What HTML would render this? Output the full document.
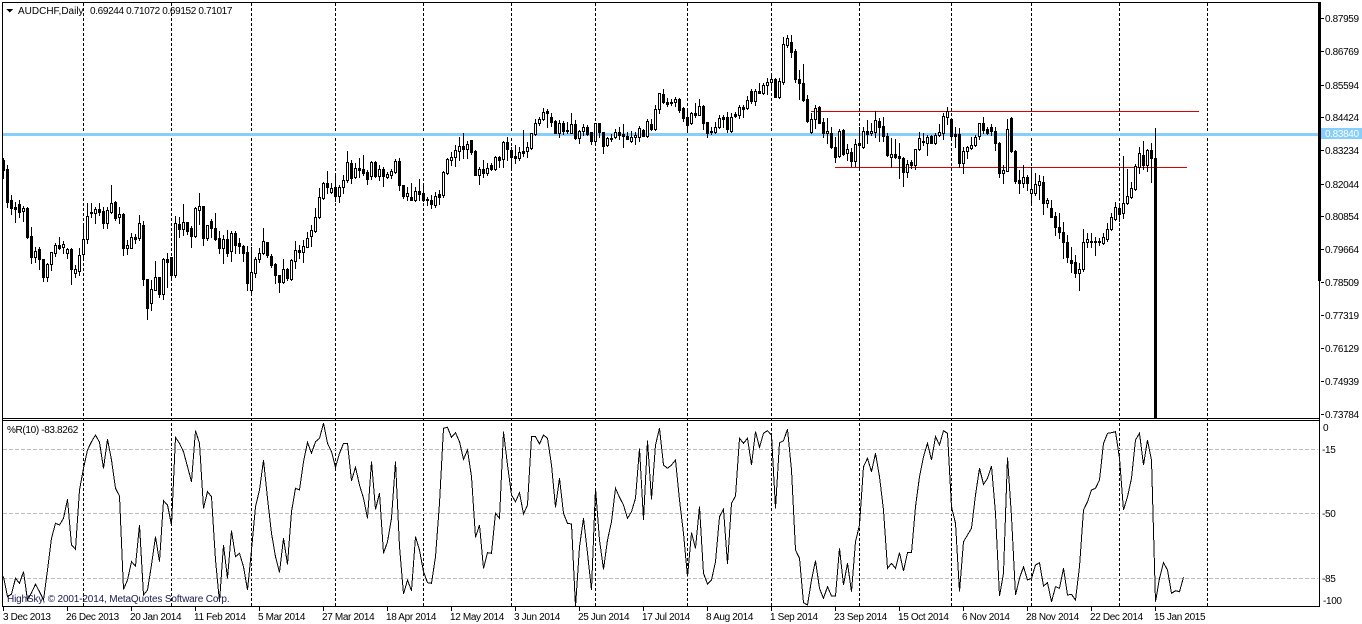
<!DOCTYPE html>
<html>
<head>
<meta charset="utf-8">
<title>AUDCHF,Daily</title>
<style>
html,body{margin:0;padding:0;background:#fff;width:1362px;height:624px;overflow:hidden}
svg{position:absolute;left:0;top:0;display:block}
text{font-family:"Liberation Sans",sans-serif;font-size:10px;fill:#000;letter-spacing:-.35px}
</style>
</head>
<body>
<svg id="c" width="1362" height="624" viewBox="0 0 1362 624" xmlns="http://www.w3.org/2000/svg">
<rect width="1362" height="624" fill="#fff"/>
<g id="dash" shape-rendering="crispEdges" stroke="#000" stroke-dasharray="3 2" stroke-width="1">
<path d="M83.5 3V606M171.5 3V606M251.5 3V606M335.5 3V606M423.5 3V606M511.5 3V606M595.5 3V606M687.5 3V606M771.5 3V606M859.5 3V606M951.5 3V606M1031.5 3V606M1119.5 3V606M1207.5 3V606"/>
</g>
<g shape-rendering="crispEdges" stroke="#bdbdbd" stroke-dasharray="4 2" stroke-width="1">
<path d="M3 449.5H1318M3 513.5H1318M3 578.5H1318"/>
</g>
<rect x="3" y="133" width="1315" height="3" fill="#87cefa"/>
<g shape-rendering="crispEdges" stroke="#d80000" stroke-width="1">
<path d="M811 111.5H1199M835 167.5H1187"/>
</g>
<g id="candles" shape-rendering="crispEdges"></g>
<polyline id="wpr" fill="none" stroke="#000" stroke-width="1" shape-rendering="crispEdges"/>
<g shape-rendering="crispEdges" fill="#fff">
<rect x="0" y="607" width="1362" height="17"/>
<rect x="1321" y="0" width="41" height="607"/>
</g>
<g shape-rendering="crispEdges" fill="#000">
<rect x="2" y="2" width="1318" height="1"/>
<rect x="2" y="2" width="1" height="605"/>
<rect x="2" y="418" width="1318" height="1"/>
<rect x="2" y="420" width="1318" height="1"/>
<rect x="2" y="606" width="1318" height="1"/>
<rect x="1318" y="2" width="3" height="279"/>
<rect x="1319" y="281" width="1" height="326"/>
<path d="M6 9h7l-3.500 3.500z"/>
<path d="M1321 18h3v1h-3zM1321 51h3v1h-3zM1321 85h3v1h-3zM1321 117h3v1h-3zM1321 150h3v1h-3zM1321 184h3v1h-3zM1321 216h3v1h-3zM1321 249h3v1h-3zM1321 282h3v1h-3zM1321 315h3v1h-3zM1321 348h3v1h-3zM1321 381h3v1h-3zM1321 414h3v1h-3z"/>
<path d="M3 607h1v4h-1zM67 607h1v4h-1zM131 607h1v4h-1zM195 607h1v4h-1zM259 607h1v4h-1zM323 607h1v4h-1zM387 607h1v4h-1zM451 607h1v4h-1zM515 607h1v4h-1zM579 607h1v4h-1zM643 607h1v4h-1zM707 607h1v4h-1zM771 607h1v4h-1zM835 607h1v4h-1zM899 607h1v4h-1zM963 607h1v4h-1zM1027 607h1v4h-1zM1091 607h1v4h-1zM1155 607h1v4h-1z"/>
</g>
<rect x="1321" y="128" width="41" height="11" fill="#87cefa"/>
<text x="18" y="14" style="letter-spacing:0">AUDCHF,Daily</text>
<text x="90" y="14">0.69244 0.71072 0.69152 0.71017</text>
<text x="7" y="433">%R(10) -83.8262</text>
<text x="7" y="602" style="fill:#1a1a50;letter-spacing:-.15px">HighSky, © 2001-2014, MetaQuotes Software Corp.</text>
<g>
<text x="1325" y="22">0.87959</text>
<text x="1325" y="55">0.86769</text>
<text x="1325" y="89">0.85594</text>
<text x="1325" y="121">0.84424</text>
<text x="1325" y="137" style="fill:#fff">0.83840</text>
<text x="1325" y="154">0.83234</text>
<text x="1325" y="188">0.82044</text>
<text x="1325" y="220">0.80854</text>
<text x="1325" y="253">0.79664</text>
<text x="1325" y="286">0.78509</text>
<text x="1325" y="319">0.77319</text>
<text x="1325" y="352">0.76129</text>
<text x="1325" y="385">0.74939</text>
<text x="1325" y="418">0.73784</text>
<text x="1323" y="431">0</text>
<text x="1322" y="453">-15</text>
<text x="1322" y="517">-50</text>
<text x="1322" y="582">-85</text>
<text x="1323" y="604">-100</text>
</g>
<g>
<text x="3" y="620">3 Dec 2013</text>
<text x="66" y="620">26 Dec 2013</text>
<text x="130" y="620">20 Jan 2014</text>
<text x="194" y="620">11 Feb 2014</text>
<text x="258" y="620">5 Mar 2014</text>
<text x="322" y="620">27 Mar 2014</text>
<text x="386" y="620">18 Apr 2014</text>
<text x="450" y="620">12 May 2014</text>
<text x="514" y="620">3 Jun 2014</text>
<text x="578" y="620">25 Jun 2014</text>
<text x="642" y="620">17 Jul 2014</text>
<text x="706" y="620">8 Aug 2014</text>
<text x="770" y="620">1 Sep 2014</text>
<text x="834" y="620">23 Sep 2014</text>
<text x="898" y="620">15 Oct 2014</text>
<text x="962" y="620">6 Nov 2014</text>
<text x="1026" y="620">28 Nov 2014</text>
<text x="1090" y="620">22 Dec 2014</text>
<text x="1154" y="620">15 Jan 2015</text>
</g>
</svg>
<script>
var D="158 178 160 170 1;165 207 169 202 1;195 214 200 208 1;202 222 207 209 1;200 217 204 212 1;206 221 208 211 0;207 238 208 237 1;227 263 236 257 1;247 262 251 257 0;247 269 249 259 1;259 281 259 277 1;263 281 264 277 0;252 270 252 264 0;243 256 245 253 0;237 249 245 248 1;241 253 244 247 0;248 258 249 253 0;248 284 249 269 1;265 277 269 273 0;248 275 255 271 0;225 258 239 254 0;203 243 216 239 0;203 217 212 213 1;207 223 209 213 0;203 215 209 212 1;207 228 211 223 1;207 228 210 223 0;185 213 203 212 0;201 220 202 218 1;207 223 214 217 0;213 255 214 248 1;240 254 245 248 0;233 248 237 248 0;234 243 237 239 1;215 240 223 238 0;221 285 225 279 1;279 319 279 308 1;280 310 289 303 0;261 290 277 290 0;277 297 277 294 1;258 299 259 294 0;253 287 259 262 1;257 280 257 275 1;216 277 223 275 0;217 237 224 229 1;204 235 222 229 0;222 234 222 231 1;226 247 228 236 1;207 237 208 236 0;193 224 206 210 0;206 245 206 238 1;225 240 225 238 0;219 237 221 228 1;213 240 228 239 1;231 253 238 248 1;235 263 239 248 0;230 256 239 253 1;231 261 233 251 0;231 253 233 245 1;238 253 243 246 1;245 261 246 253 1;246 290 252 283 1;247 294 272 290 0;257 277 259 273 0;248 262 253 259 0;228 254 241 253 0;242 257 242 255 1;254 267 256 265 1;263 283 264 275 1;275 292 275 282 1;259 283 269 282 0;268 280 269 278 1;259 280 260 279 0;241 268 250 261 0;245 258 250 252 1;240 262 246 252 0;232 247 238 247 0;225 246 230 236 0;208 232 217 231 0;188 218 197 217 0;182 199 183 198 0;171 193 183 187 1;183 193 188 192 0;176 201 187 196 1;185 202 187 196 0;175 193 180 187 0;151 182 162 180 0;160 183 163 178 1;163 178 168 177 0;158 177 168 170 1;155 175 169 173 1;170 184 172 179 1;161 179 162 176 0;161 177 162 176 1;165 180 169 176 0;167 186 169 176 1;172 178 174 177 0;169 178 171 175 0;159 173 161 172 0;158 190 161 185 1;185 198 185 196 1;187 200 193 196 0;183 200 197 200 1;187 201 191 200 0;179 200 191 194 1;183 201 193 200 1;197 205 199 200 1;195 208 200 204 1;192 207 196 205 0;190 204 194 197 1;171 197 172 195 0;158 174 159 173 0;152 165 157 160 0;145 166 150 157 0;137 160 146 151 0;133 158 146 149 1;141 158 144 149 0;140 154 140 152 1;150 175 151 175 1;167 184 169 175 0;160 177 169 173 1;163 175 168 173 0;163 170 165 169 1;156 170 157 169 0;156 167 157 160 1;141 167 142 159 0;137 160 142 149 1;147 167 150 157 1;145 163 156 158 1;147 160 152 158 0;130 156 151 153 1;142 157 147 151 0;133 149 133 148 0;119 135 123 134 0;117 125 119 123 0;108 120 112 119 0;109 127 111 113 1;113 126 117 122 1;120 133 121 133 1;120 137 123 133 0;121 134 123 131 1;122 133 130 131 0;113 133 124 133 0;120 139 124 138 1;130 143 131 138 0;124 135 127 131 0;125 135 127 134 1;132 144 132 141 1;123 145 123 141 0;123 137 123 132 1;132 153 132 146 1;137 146 138 145 0;134 141 138 139 0;129 138 132 137 0;127 139 132 135 1;124 147 134 136 1;132 139 136 139 1;131 142 137 141 0;132 144 135 137 0;126 141 128 137 0;129 136 130 136 1;119 137 121 136 0;119 130 124 129 1;105 130 109 129 0;93 113 93 109 0;89 103 94 102 1;98 106 102 104 1;99 105 102 103 1;97 106 99 102 0;98 112 99 110 1;107 121 108 118 1;110 132 117 125 1;112 124 113 123 0;103 117 113 115 1;99 115 106 115 0;105 129 106 123 1;122 137 122 133 1;127 134 131 132 0;122 133 127 132 0;115 128 118 127 0;115 127 117 119 1;112 132 117 129 1;113 132 117 131 0;112 117 114 116 1;105 118 107 115 0;105 117 107 109 1;96 109 100 108 0;89 103 91 101 1;89 105 91 101 0;83 93 91 93 1;83 94 85 93 0;78 94 82 85 0;75 88 79 82 0;78 97 79 97 1;78 98 81 97 0;37 84 44 82 0;35 47 38 45 0;35 57 42 52 1;49 82 51 79 1;70 99 79 83 1;64 101 83 100 1;95 122 99 121 1;113 133 119 132 0;105 128 108 119 0;106 123 107 123 1;118 137 122 133 1;118 143 131 133 0;127 148 133 147 1;137 162 147 157 1;129 157 131 156 0;129 155 130 154 1;144 160 149 153 0;148 166 152 161 1;139 166 144 161 0;127 167 143 145 1;127 148 131 147 0;120 143 131 134 1;123 135 131 133 0;111 137 120 132 0;118 141 121 127 1;117 141 126 136 1;133 156 136 155 1;138 167 154 157 0;139 158 154 157 1;143 178 156 158 1;157 186 158 172 1;160 177 164 172 0;160 168 162 165 1;149 169 149 165 0;132 150 138 149 0;133 145 141 142 0;135 155 137 143 0;135 143 136 143 1;133 144 135 143 0;124 136 132 135 0;113 139 116 133 0;107 124 111 117 0;118 137 119 136 1;127 147 134 136 1;128 167 134 163 1;147 173 151 163 0;146 158 147 151 0;137 149 145 148 0;135 146 137 145 0;123 139 123 136 0;117 133 123 130 1;127 134 129 133 1;124 135 127 131 1;127 150 131 143 1;142 177 143 173 1;165 183 170 173 0;119 171 129 171 0;117 152 118 151 1;150 183 151 181 1;170 193 180 183 1;165 187 177 183 0;175 190 177 183 1;167 202 189 193 0;173 195 184 193 0;175 199 181 185 0;176 214 182 203 1;198 207 200 203 0;200 217 208 217 1;212 235 216 227 1;213 238 227 232 1;222 258 232 242 1;235 262 242 257 1;247 272 260 263 1;255 277 262 273 1;263 290 269 273 0;229 271 242 269 0;233 247 239 242 0;233 247 241 242 1;237 255 241 242 1;238 245 241 242 1;233 244 237 243 0;223 241 229 239 0;213 230 217 229 0;202 220 207 219 0;203 221 208 214 1;156 218 203 213 0;169 204 196 203 0;182 198 188 197 0;164 190 166 189 0;147 173 153 167 0;141 169 155 165 1;149 171 150 165 0;143 182 150 158 1;128 418 158 418 1";
var p=[];
D.split(";").forEach(function(s,i){
  var a=s.split(" ").map(Number),x=3+4*i;
  p.push('<rect x="'+x+'" y="'+a[0]+'" width="1" height="'+(a[1]-a[0]+1)+'" fill="#000"/>');
  var t=a[2],h=Math.max(a[3]-a[2],1);
  p.push('<rect x="'+(x-1)+'" y="'+t+'" width="3" height="'+(h+1)+'" fill="#000"/>');
  if(!a[4]&&h>1)p.push('<rect x="'+x+'" y="'+(t+1)+'" width="1" height="'+(h-1)+'" fill="#fff"/>');
});
document.getElementById("candles").innerHTML=p.join("");
var R1=[500,560,552,505,520,485,570,548,523,545,570,480,385,340,345,325,268,405,418,240,175,120,95,75,97,175,88,150,235,258,538,510,455,468,345,555,540,465,380,455,272,285,345,82,100,125,170,215,62,100,295,245,260,450,575,405,505,362,440,430,470,540,420,290,240,150,265,370,440,487,385,463,305,235,240,155,97,130,95,85,40,100,125,172,130,
100,100,212,172,225,265,325,155,298,250,430,395,325,155,410,552,510,542,380,420,485,518,520,440,280,55,52,82,68,95,148,120,200,382,345,475,428,430,310,325,65,165,255,275,248,312,285,80,80,102,75,85,165,292,205,310,340,342,590,410,325,430,540,235,390,478,390,335,235,262,285,325,305,265,115,330,92,268,105,55,165,175,165,150,270,
370,500,368,415,290,490,522,510,455,320,298,462,280,258,85,100,85,165,65,112,70,62,75,295,98,92,58,180,420,445,578,585,510,452,535,565,530,558,558,415,525,460,545,395,345,170,145,185,130,200,300,475,460,475,428,483,428,428,290,200,140,100,150,80,105,62,70,290,340,545,395,375,355,255,175,223,205,168,310,558,490,142,320,555,505];
var R2=[500,540,535,495,488,558,548,605,560,565,505,585,583,600,500,330,305,270,265,240,130,100,98,95,175,330,290,235,120,100,195,120,180,605,535,488,510,580,572,575,532];
var pts=[];
R1.forEach(function(v,i){pts.push((3.5+4*i)+","+(410+v/3).toFixed(1))});
var n=R1.length;
R2.forEach(function(v,i){pts.push((3.5+4*(n+i))+","+(400+v/3).toFixed(1))});
document.getElementById("wpr").setAttribute("points",pts.join(" "));
</script>
</body>
</html>
